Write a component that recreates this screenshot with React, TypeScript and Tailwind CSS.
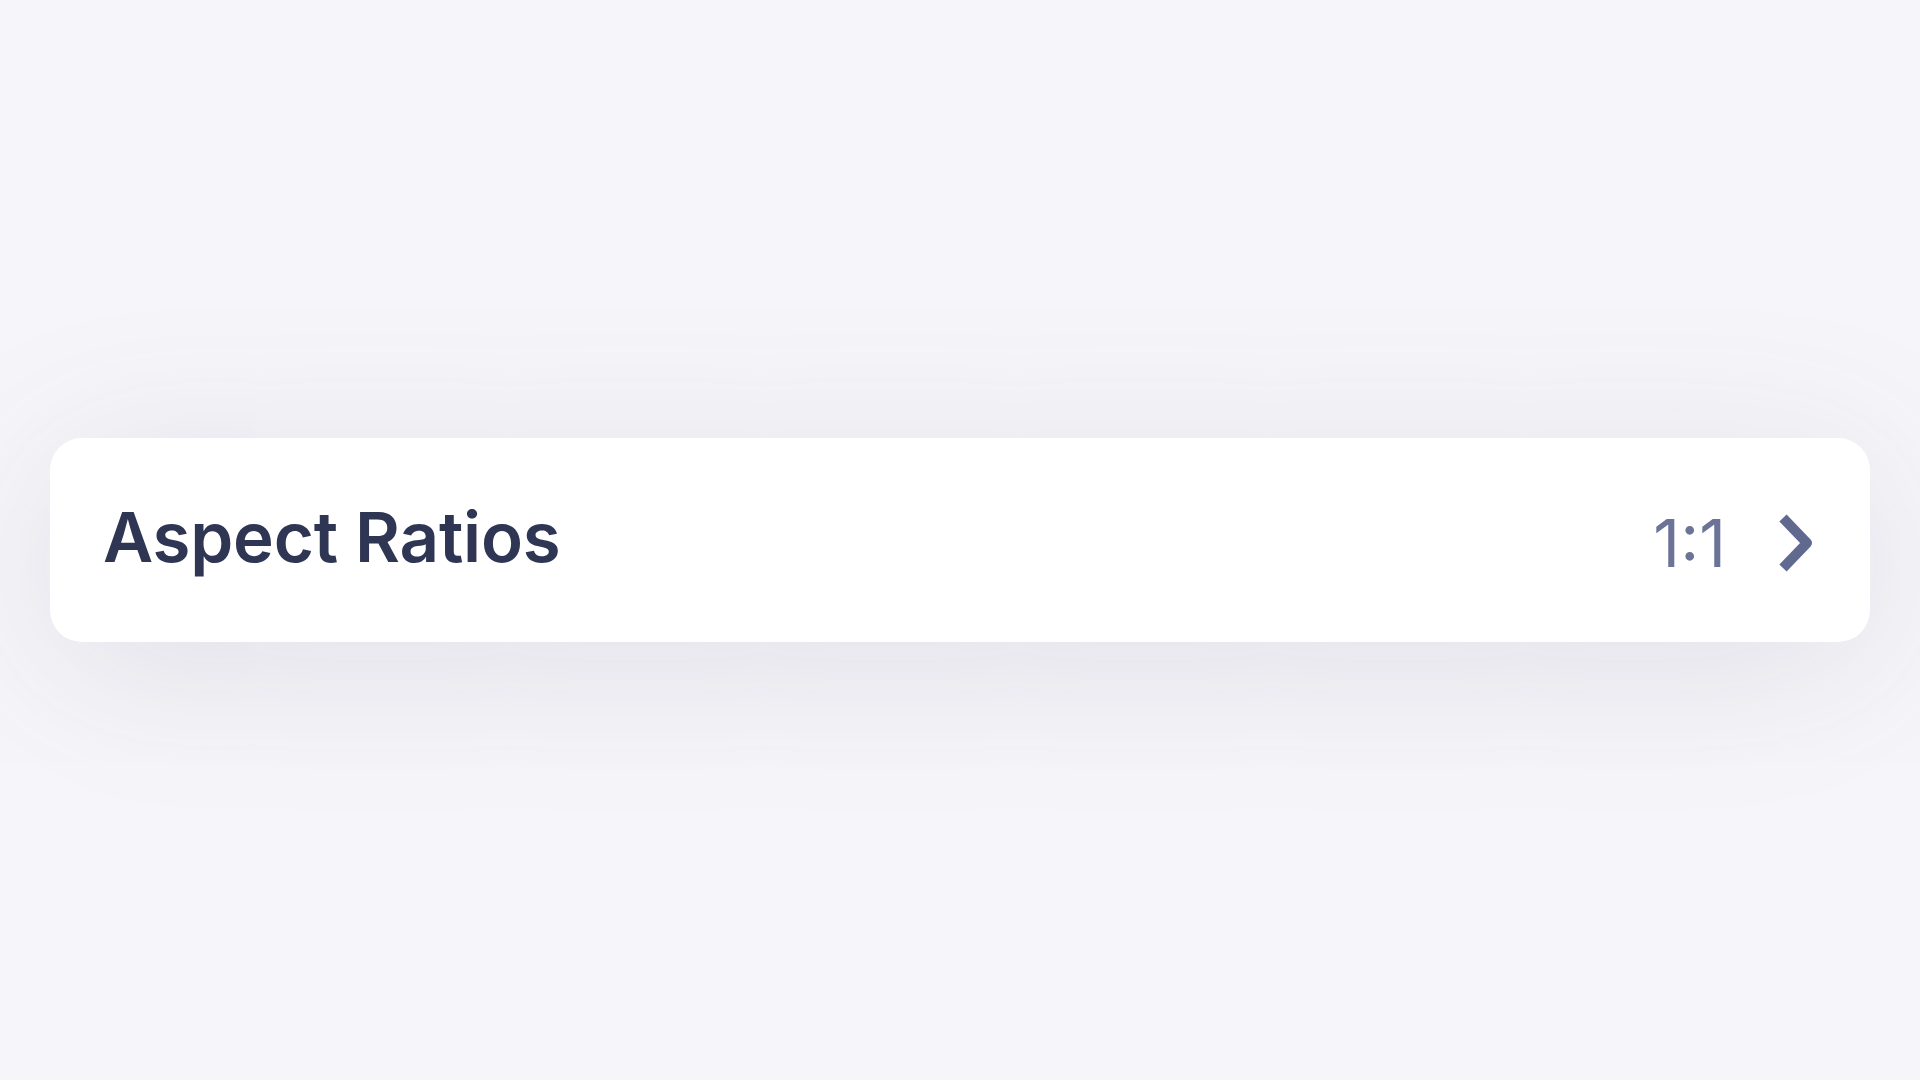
import { useState } from 'react'

export default function App() {
  const [ratio] = useState('1:1')

  return (
    <div className="min-h-screen bg-[#f6f6fa] flex items-center px-[50px]" style={{ fontFamily: 'Inter, "Noto Sans", sans-serif' }}>
      <button className="w-full h-[204px] bg-white rounded-[32px] flex items-center justify-between pl-[53px] pr-[56px] shadow-[0_24px_170px_rgba(60,60,90,0.13)] text-left">
        <span className="text-[69px] leading-none font-semibold text-[#2f3654] tracking-[-0.2px] -translate-y-[3px]">
          Aspect Ratios
        </span>
        <span className="flex items-center gap-[52px] translate-y-[3px]">
          <span className="text-[66px] leading-none font-normal text-[#6b7397]">{ratio}</span>
          <svg width="36" height="58" viewBox="0 0 36 58" fill="none">
            <path d="M5 4 L29 29 L5 54" stroke="#606a91" strokeWidth="10" strokeLinecap="butt" strokeLinejoin="round" />
          </svg>
        </span>
      </button>
    </div>
  )
}
